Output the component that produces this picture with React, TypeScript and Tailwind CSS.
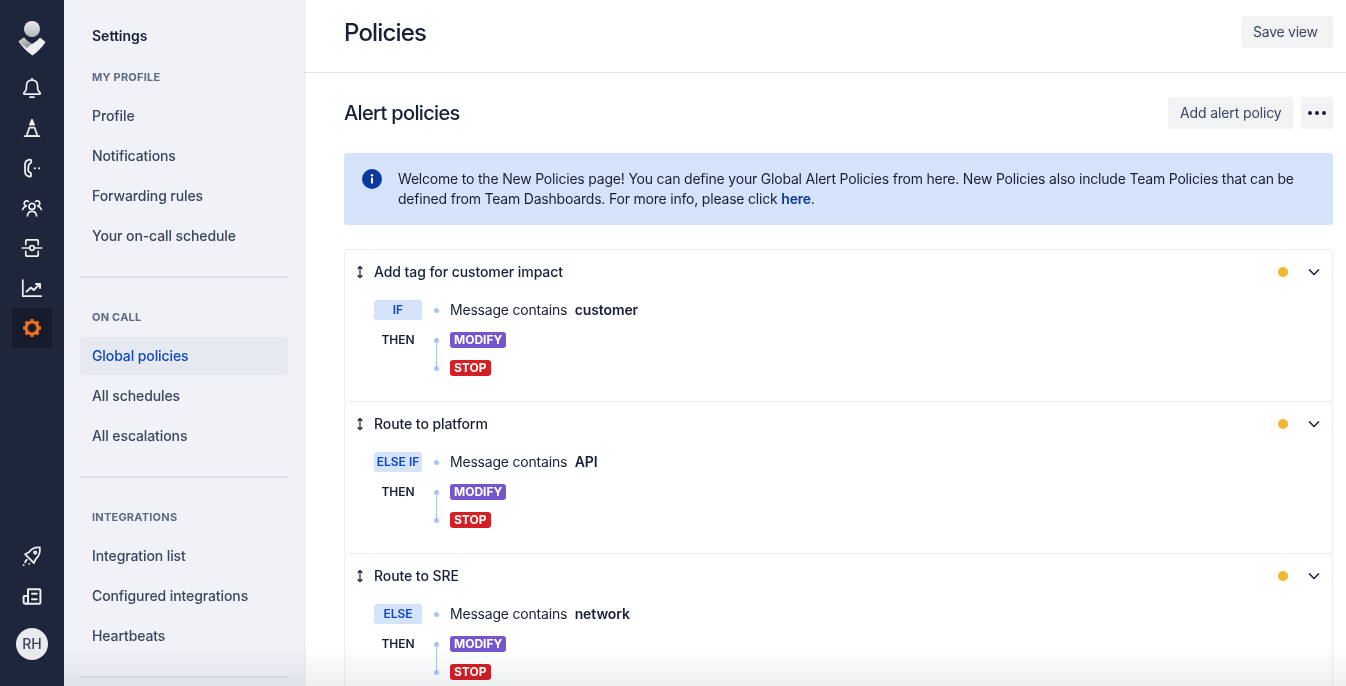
import React from 'react';

const navIcon = 'w-6 h-6 text-[#eceef2]';

function Bell() {
  return (
    <svg viewBox="0 0 24 24" fill="none" stroke="currentColor" strokeWidth="1.7" strokeLinejoin="round" strokeLinecap="round" className={navIcon}>
      <path d="M12 4.2c-3.6 0-5.6 2.6-5.6 6v2.6c0 1.6-1.7 3-2.6 4.2-.4.6 0 1.2.7 1.2h15c.7 0 1.1-.6.7-1.2-.9-1.2-2.6-2.6-2.6-4.2v-2.6c0-3.4-2-6-5.6-6z" />
      <path d="M12 2.600v1.600M10 21.200h4" />
    </svg>
  );
}

function Cone() {
  return (
    <svg viewBox="0 0 24 24" fill="none" stroke="currentColor" strokeWidth="1.7" strokeLinejoin="round" strokeLinecap="round" className={navIcon}>
      <path d="M12 3.600l2.300 5.200H9.700z" fill="currentColor" strokeWidth="1.400" />
      <path d="M9.400 11.600h5.200l3 8.600H6.400z" />
      <path d="M4.600 20.200h14.800" />
    </svg>
  );
}

function Phone() {
  return (
    <svg viewBox="0 0 24 24" fill="none" stroke="currentColor" strokeWidth="1.800" strokeLinejoin="round" strokeLinecap="round" className={navIcon}>
      <path d="M9.600 3.600L7.400 4.400C5.800 5 5 6.600 5 9v6c0 2.600.8 4.200 2.400 4.800l2.400.8c.8.2 1.200-.2 1.200-.8v-2.200c0-.6-.4-1-1-1.200l-1-.4c-.6-.6-1-3-.6-5.400.2-1.600.6-2.600 1.400-3l.6-.4c.6-.3.8-.7.8-1.200V4.600c0-.8-.6-1.200-1.600-1z" />
      <circle cx="14.800" cy="12.300" r="1.100" fill="currentColor" stroke="none" />
      <circle cx="19" cy="12.300" r="1.100" fill="currentColor" stroke="none" />
    </svg>
  );
}

function People() {
  return (
    <svg viewBox="0 0 24 24" fill="none" stroke="currentColor" strokeWidth="1.700" strokeLinejoin="round" strokeLinecap="round" className={navIcon}>
      <circle cx="12" cy="10.400" r="3" />
      <path d="M7.400 19.800c.4-2.800 2-4.400 4.600-4.400s4.200 1.600 4.600 4.400" />
      <path d="M8.400 5.400a2.600 2.600 0 1 0-2 4.600c-2 .6-3.200 1.800-3.800 3.600" />
      <path d="M15.600 5.400a2.600 2.600 0 1 1 2 4.600c2 .6 3.200 1.800 3.800 3.600" />
    </svg>
  );
}

function Service() {
  return (
    <svg viewBox="0 0 24 24" fill="none" stroke="currentColor" strokeWidth="1.700" strokeLinejoin="round" strokeLinecap="round" className={navIcon}>
      <path d="M5.800 8.600V4.800c0-.6.400-1 1-1h10.400c.6 0 1 .4 1 1v3.800" />
      <path d="M5.800 15.400v3.800c0 .6.400 1 1 1h10.400c.6 0 1-.4 1-1v-3.800" />
      <path d="M2.400 12h7M14.600 12h7" />
      <circle cx="12" cy="12" r="2.300" />
    </svg>
  );
}

function Chart() {
  return (
    <svg viewBox="0 0 24 24" fill="none" stroke="currentColor" strokeWidth="1.700" strokeLinejoin="round" strokeLinecap="round" className={navIcon}>
      <path d="M2.800 4v16.200h18.400" />
      <path d="M6.600 15.600l4.200-4 3 2.400 5.400-5.400" strokeWidth="2" />
      <path d="M16 8h4v4" strokeWidth="2" />
    </svg>
  );
}

function Gear() {
  return (
    <svg viewBox="0 0 24 24" fill="none" className="w-6 h-6 text-[#f0701f]">
      <circle cx="12" cy="12" r="6" stroke="currentColor" strokeWidth="3.200" />
      <path d="M12 3v3M12 18v3M3 12h3M18 12h3M5.600 5.600l2.200 2.200M16.200 16.200l2.200 2.200M5.600 18.400l2.200-2.200M16.200 7.800l2.200-2.200" stroke="currentColor" strokeWidth="3" />
    </svg>
  );
}

function Rocket() {
  return (
    <svg viewBox="0 0 24 24" fill="none" stroke="currentColor" strokeWidth="1.800" strokeLinejoin="round" strokeLinecap="round" className={navIcon}>
      <path d="M19.800 3.400c-4.800-.4-8.200 1-10.800 4.800L5 10.200l8.800 8.800 2-4c3.400-2.800 4.600-6.600 4-11.600z" />
      <circle cx="15.200" cy="8.600" r="1.200" />
      <path d="M6.800 15.800c-.8.600-1.400 1.400-1.600 2.600M3.600 21.200h.1M9.200 19.800h.1" />
    </svg>
  );
}

function Docs() {
  return (
    <svg viewBox="0 0 24 24" fill="none" stroke="currentColor" strokeWidth="2" strokeLinejoin="round" strokeLinecap="round" className={navIcon}>
      <path d="M8 6.200V18c0 1.200-.8 1.800-2 1.800s-2.400-.6-2.400-1.800v-5c0-.6.400-1 1-1H8" />
      <path d="M8 5.200h11.400c.6 0 1 .4 1 1v12.600c0 .6-.4 1-1 1H6" />
      <path d="M12 9.800h4.800M12 15.200h4.800" />
    </svg>
  );
}

function Logo() {
  return (
    <svg viewBox="0 0 32 40" className="w-8 h-10">
      <defs>
        <linearGradient id="head" x1="0" y1="0" x2="0" y2="1">
          <stop offset="0" stopColor="#eeeeef" />
          <stop offset="1" stopColor="#b4b6bc" />
        </linearGradient>
        <linearGradient id="arm" x1="0" y1="0" x2="1" y2="1">
          <stop offset="0" stopColor="#d9dade" />
          <stop offset="1" stopColor="#7f828c" />
        </linearGradient>
      </defs>
      <circle cx="16" cy="11" r="8" fill="url(#head)" />
      <path d="M2.500 23.500L8 19.500c2 2.500 4.500 4.500 8 6.500 3.500-2 6-4 8-6.500l5.500 4.500C26 29.500 21.500 34 16.500 37.500 11 34 6.500 29 2.500 23.500z" fill="#eeeef0" />
      <path d="M8 19.500c2 2.500 4.500 4.500 8 6.500-2 1.200-3.800 2.600-5 4.200-3-2-6-4.500-8.500-6.700z" fill="url(#arm)" />
    </svg>
  );
}

function Rail() {
  const top = [Bell, Cone, Phone, People, Service, Chart];
  return (
    <div className="w-16 shrink-0 bg-[#1e263b] flex flex-col items-center pt-[18px] pb-[26px]">
      <div className="h-[50px] flex items-start justify-center"><Logo /></div>
      {top.map((Icon, i) => (
        <div key={i} className="h-10 w-10 flex items-center justify-center"><Icon /></div>
      ))}
      <div className="h-10 w-10 rounded-[3px] bg-[#161c2b] flex items-center justify-center"><Gear /></div>
      <div className="mt-auto h-10 w-10 flex items-center justify-center"><Rocket /></div>
      <div className="h-10 w-10 flex items-center justify-center"><Docs /></div>
      <div className="mt-3 w-8 h-8 rounded-full bg-[#e9eaee] text-[#3a4358] text-sm font-medium flex items-center justify-center">RH</div>
    </div>
  );
}

function SideLink({ label, active }: { label: string; active?: boolean }) {
  return (
    <div className={`h-[38px] mb-0.5 px-3 flex items-center rounded-[3px] text-sm font-medium tracking-[-0.1px] ${active ? 'bg-[#e7e9f0] text-[#0d47c1]' : 'text-[#3a4660]'}`}>
      {label}
    </div>
  );
}

function SideHead({ label }: { label: string }) {
  return <div className="h-10 px-3 flex items-center text-[11px] font-bold tracking-[0.02em] text-[#5e6a82]">{label}</div>;
}

function Sidebar() {
  return (
    <div className="w-60 shrink-0 bg-[#f1f2f7] px-4 pt-4 shadow-[1px_0_2px_rgba(9,30,66,0.12)] z-10">
      <div className="h-10 mb-px px-3 flex items-center text-sm font-semibold text-[#172038]">Settings</div>
      <SideHead label="MY PROFILE" />
      <SideLink label="Profile" />
      <SideLink label="Notifications" />
      <SideLink label="Forwarding rules" />
      <SideLink label="Your on-call schedule" />
      <div className="h-0.5 bg-[#dfe1e8] mt-[21px] mb-[19px]" />
      <SideHead label="ON CALL" />
      <SideLink label="Global policies" active />
      <SideLink label="All schedules" />
      <SideLink label="All escalations" />
      <div className="h-0.5 bg-[#dfe1e8] mt-[21px] mb-[19px]" />
      <SideHead label="INTEGRATIONS" />
      <SideLink label="Integration list" />
      <SideLink label="Configured integrations" />
      <SideLink label="Heartbeats" />
      <div className="h-0.5 bg-[#dfe1e8] mt-[21px]" />
    </div>
  );
}

function Tag({ label, color }: { label: string; color: string }) {
  return <span className={`h-4 px-1 rounded-[3px] text-white text-xs font-bold flex items-center leading-none ${color}`}>{label}</span>;
}

function Policy({ title, cond, value }: { title: string; cond: string; value: string }) {
  return (
    <div className="h-[153px] border border-[#ebecf0] rounded-[3px] -mt-px first:mt-0 pl-[10px] pr-[12px] text-[#172038]">
      <div className="h-11 flex items-center">
        <svg viewBox="0 0 10 14" fill="none" stroke="#172038" strokeWidth="1.200" strokeLinecap="round" strokeLinejoin="round" className="w-2.5 h-3.5 shrink-0">
          <path d="M5 1.500v11M3 3.500l2-2 2 2M3 10.500l2 2 2-2" />
        </svg>
        <span className="ml-[9px] text-sm font-medium tracking-[-0.08px]">{title}</span>
        <span className="ml-auto w-2.5 h-2.5 rounded-full bg-[#f6b52f]" />
        <svg viewBox="0 0 12 8" fill="none" stroke="#172038" strokeWidth="1.500" className="ml-[20px] w-3 h-2">
          <path d="M1 1.500l5 5 5-5" />
        </svg>
      </div>
      <div className="ml-[19px] mt-1.5 flex items-center h-5">
        <span className="w-12 h-5 rounded-[3px] bg-[#d5e3fb] text-[#0d47c1] text-xs font-semibold flex items-center justify-center">{cond}</span>
        <span className="ml-3 w-[5px] h-[5px] rounded-full bg-[#a5c6f5]" />
        <span className="ml-[11px] text-sm whitespace-pre tracking-[-0.2px]">Message contains  <b className="font-semibold tracking-[-0.1px]">{value}</b></span>
      </div>
      <div className="ml-[19px] mt-3 flex items-start">
        <span className="w-12 h-4 text-xs font-semibold flex items-center justify-center">THEN</span>
        <div className="ml-3 w-[5px] h-[33px] mt-1.5 flex flex-col items-center justify-between">
          <span className="w-[5px] h-[5px] rounded-full bg-[#a5c6f5] shrink-0" />
          <span className="w-px flex-1 bg-[#a5c6f5]" />
          <span className="w-[5px] h-[5px] rounded-full bg-[#a5c6f5] shrink-0" />
        </div>
        <div className="ml-[11px] flex flex-col items-start gap-3">
          <Tag label="MODIFY" color="bg-[#7556cf]" />
          <Tag label="STOP" color="bg-[#d31f26]" />
        </div>
      </div>
    </div>
  );
}

function Btn({ children, className }: { children: React.ReactNode; className?: string }) {
  return <button className={`h-8 rounded-[3px] bg-[#f2f3f5] text-[#3a4660] text-sm flex items-center ${className ?? ''}`}>{children}</button>;
}

export default function App() {
  return (
    <div className="relative h-screen overflow-hidden flex bg-white font-['Inter','Liberation_Sans',sans-serif]">
      <Rail />
      <Sidebar />
      <div className="flex-1 min-w-0">
        <div className="h-[73px] border-b border-[#e4e5ea] pl-10 pr-[13px] flex items-start justify-between">
          <h1 className="mt-4 text-2xl leading-[34px] font-medium tracking-[-0.85px] text-[#172038]">Policies</h1>
          <Btn className="mt-4 w-[92px] pl-3 tracking-[-0.25px]">Save view</Btn>
        </div>
        <div className="pl-10 pr-[13px]">
          <div className="h-20 flex items-center">
            <h2 className="text-xl font-medium tracking-[-0.65px] text-[#172038]">Alert policies</h2>
            <Btn className="ml-auto w-[125px] pl-3 tracking-[-0.12px]">Add alert policy</Btn>
            <Btn className="ml-2 w-8 gap-[3px] justify-center">
              <span className="w-1 h-1 rounded-full bg-[#172038]" />
              <span className="w-1 h-1 rounded-full bg-[#172038]" />
              <span className="w-1 h-1 rounded-full bg-[#172038]" />
            </Btn>
          </div>
          <div className="h-[72px] rounded-[3px] bg-[#d5e3fb] flex pl-[18px] pt-4 pr-4">
            <span className="w-5 h-5 rounded-full bg-[#0b3a9e] text-white flex items-center justify-center shrink-0">
              <svg viewBox="0 0 20 20" className="w-5 h-5" fill="#ffffff">
                <circle cx="10" cy="6.200" r="1.200" />
                <rect x="9" y="8.600" width="2" height="6" rx="0.600" />
              </svg>
            </span>
            <p className="ml-4 text-sm leading-5 tracking-[-0.2px] text-[#172038]">
              Welcome to the New Policies page! You can define your Global Alert Policies from here. New Policies also include Team Policies that can be defined from Team Dashboards. For more info, please click <a className="font-semibold text-[#0b3a9e]">here</a>.
            </p>
          </div>
          <div className="mt-6">
            <Policy title="Add tag for customer impact" cond="IF" value="customer" />
            <Policy title="Route to platform" cond="ELSE IF" value="API" />
            <Policy title="Route to SRE" cond="ELSE" value="network" />
          </div>
        </div>
      </div>
      <div className="absolute left-16 right-0 bottom-0 h-10 z-20 bg-gradient-to-b from-white to-[#eff0f2] mix-blend-multiply pointer-events-none" />
    </div>
  );
}
